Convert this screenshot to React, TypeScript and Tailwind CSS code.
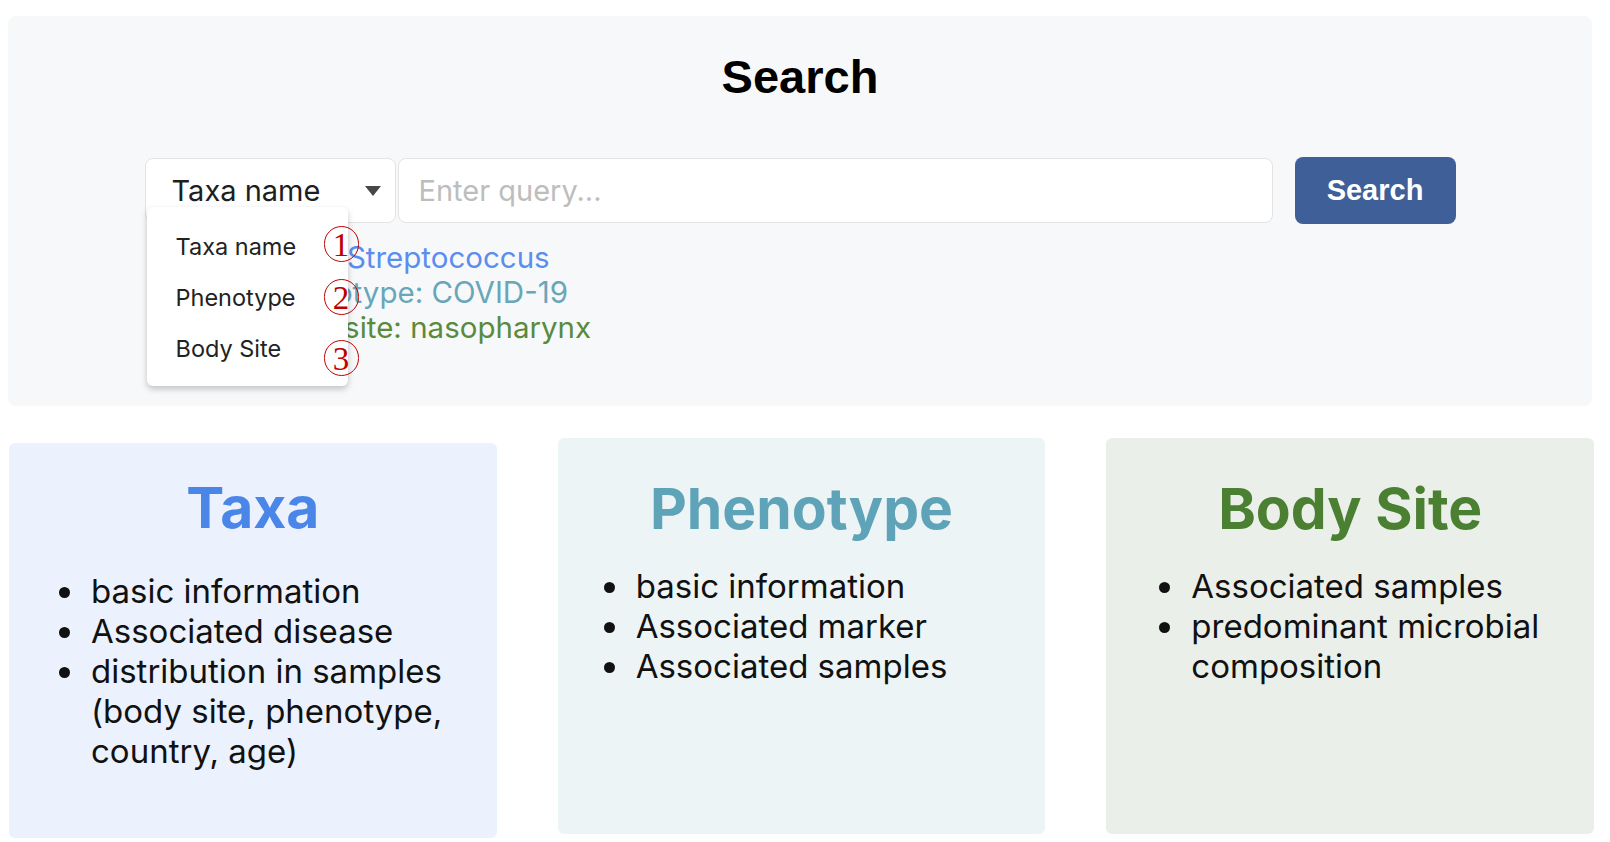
import { useState } from "react";

const MENU = ["Taxa name", "Phenotype", "Body Site"];

// red hand-drawn style markers over the open menu
function Marker({ n, className }: { n: string; className: string }) {
  return (
    <span
      className={`absolute z-20 flex h-[36px] w-[35px] items-center justify-center rounded-full border-[1.5px] border-[#c00000] pt-[2px] text-[33px] leading-none text-[#c00000] ${className}`}
      style={{ fontFamily: '"Liberation Serif", serif' }}
    >
      {n}
    </span>
  );
}

const CARDS = [
  {
    title: "Taxa",
    box: "mt-[5px] h-[395px] bg-[#ebf1fd] pt-[31px]",
    head: "text-[#4a86e8] mb-[29px]",
    list: "pl-[78px]",
    items: [
      "basic information",
      "Associated disease",
      "distribution in samples (body site, phenotype, country, age)",
    ],
  },
  {
    title: "Phenotype",
    box: "h-[396px] bg-[#edf4f6] pt-[37px]",
    head: "text-[#5ea3b8] mb-[23px]",
    list: "pl-[74px]",
    items: ["basic information", "Associated marker", "Associated samples"],
  },
  {
    title: "Body Site",
    box: "h-[396px] bg-[#ebefe9] pt-[37px]",
    head: "text-[#4b8032] mb-[23px]",
    list: "pl-[81px]",
    items: ["Associated samples", "predominant microbial composition"],
  },
];

export default function App() {
  const [field] = useState("Taxa name");

  return (
    <div
      className="h-[842px] w-[1610px] overflow-hidden bg-white pl-2 pt-4 text-black"
      style={{ fontFamily: "Inter, 'Noto Sans', sans-serif" }}
    >
      <div className="h-[390px] w-[1584px] rounded-lg bg-[#f7f8fa] pt-[34px]">
        <h1
          className="text-center text-[47px] font-bold leading-[54px]"
          style={{ fontFamily: '"Liberation Sans", Arial, sans-serif' }}
        >
          Search
        </h1>

        <div className="mx-auto mt-[53px] flex h-[67px] w-[1311px] items-center">
          <div className="relative h-[65px] w-[251px] rounded-lg border border-[#e3e3e3] bg-white">
            <div className="flex h-full items-center justify-between pl-[26px] pr-[14px]">
              <span className="text-[29px] text-[#1e1e1e]">{field}</span>
              <svg width="16" height="10" viewBox="0 0 16 10">
                <path d="M0 0h16L8 10z" fill="#474747" />
              </svg>
            </div>

            <div className="absolute left-[1px] top-[48px] z-10 h-[179px] w-[201px] rounded-md bg-white pb-[12px] pt-[14px] shadow-[0_3px_6px_rgba(0,0,0,0.22)]">
              {MENU.map((m) => (
                <div key={m} className="flex h-[51px] items-center pl-[29px] text-[23.5px] text-[#222]">
                  {m}
                </div>
              ))}
            </div>

            <Marker n="1" className="left-[178px] top-[67px]" />
            <Marker n="2" className="left-[178px] top-[120px]" />
            <Marker n="3" className="left-[178px] top-[181px]" />
          </div>

          <input
            className="ml-[2px] h-[65px] w-[875px] rounded-lg border border-[#e3e3e3] bg-white pl-[20px] text-[29px] outline-none placeholder:text-[#bdbdbd]"
            placeholder="Enter query..."
          />

          <button
            className="ml-[22px] h-[67px] w-[161px] rounded-lg bg-[#3f5f98] text-[29px] font-bold text-white"
            style={{ fontFamily: '"Liberation Sans", Arial, sans-serif' }}
          >
            Search
          </button>
        </div>

        <div className="ml-[256px] mt-[16px] text-[29.5px] leading-[35px]">
          <div className="text-[#5b8def]">Taxa: Streptococcus</div>
          <div className="text-[#68a6b8]">Phenotype: COVID-19</div>
          <div className="text-[#5a8a3c]">Body site: nasopharynx</div>
        </div>
      </div>

      <div className="ml-[1px] mt-[32px] grid w-[1585px] grid-cols-3 items-start gap-[61px]">
        {CARDS.map((c) => (
          <div key={c.title} className={`rounded-md ${c.box}`}>
            <h2 className={`text-center text-[57px] font-bold leading-[68px] ${c.head}`}>{c.title}</h2>
            <ul className={`list-disc pr-6 text-[33px] leading-[40px] text-[#111] ${c.list}`}>
              {c.items.map((it) => (
                <li key={it} className="pl-[4px]">
                  {it}
                </li>
              ))}
            </ul>
          </div>
        ))}
      </div>
    </div>
  );
}
